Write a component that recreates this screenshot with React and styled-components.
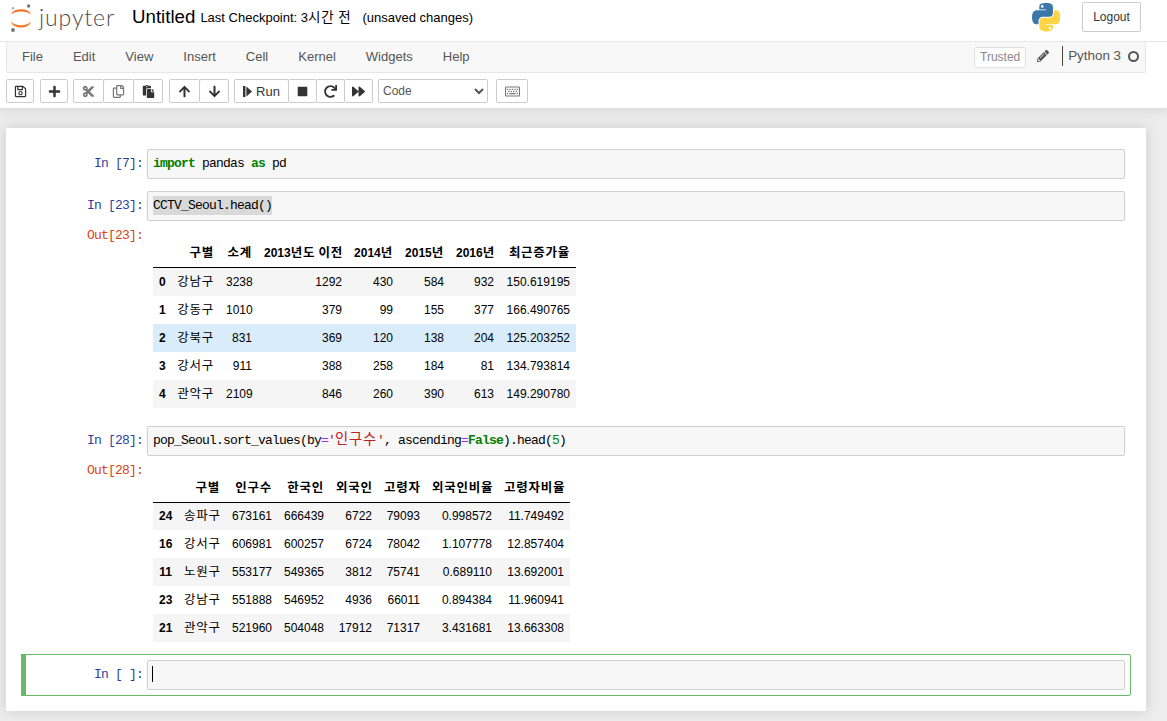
import React from 'react';
import styled, { createGlobalStyle } from 'styled-components';
import {
  FaRegSave, FaPlus, FaCut, FaRegCopy, FaPaste, FaArrowUp, FaArrowDown,
  FaStop, FaRedo, FaForward, FaRegKeyboard, FaPencilAlt,
} from 'react-icons/fa';

const SANS = `"Liberation Sans", "Noto Sans CJK KR", sans-serif`;
const MONO = `"Liberation Mono", "Noto Sans CJK KR", monospace`;

const GlobalStyle = createGlobalStyle`
  html, body { margin: 0; height: 100%; overflow: hidden; background: #eee; }
  body { font-family: ${SANS}; font-size: 13px; color: #000; }
  * { box-sizing: border-box; }
`;

// Header
const Top = styled.header`
  position: relative;
  z-index: 2;
  height: 108px;
  background: #fff;
  box-shadow: 0 0 12px 1px rgba(87, 87, 87, 0.2);
`;

const TitleBar = styled.div`
  height: 42px;
  display: flex;
  align-items: center;
  padding: 0 26px 7px 10px;
  border-bottom: 1px solid #e7e7e7;
`;

const Brand = styled.div`
  display: flex;
  align-items: center;
  width: 122px;
`;

const Wordmark = styled.span`
  font-family: Lato, "Noto Sans", sans-serif;
  font-size: 23px;
  font-weight: 300;
  letter-spacing: 0.9px;
  color: #4e4e4e;
  margin-left: 7px;
  line-height: 30px;
`;

const NotebookName = styled.span`
  font-size: 18.7px;
  margin-right: 5px;
`;

const Checkpoint = styled.span`
  font-size: 13px;
  margin-right: 11px;
`;

const Spacer = styled.div`
  flex: 1;
`;

const LogoutButton = styled.button`
  width: 59px;
  height: 30px;
  margin-left: 22px;
  background: #fff;
  border: 1px solid #ccc;
  border-radius: 2px;
  font: 12px ${SANS};
  color: #333;
  padding: 0;
`;

const MenuBar = styled.nav`
  height: 32px;
  margin: -1px 21px 0 6px;
  display: flex;
  align-items: center;
  padding: 0 6px 2px 0;
  background: #f8f8f8;
  border: 1px solid #e7e7e7;
  border-radius: 2px;
`;

const MenuItem = styled.a`
  padding: 0 15px;
  font-size: 13px;
  color: #555;
`;

const TrustedBadge = styled.span`
  width: 52px;
  height: 21px;
  margin-top: 2px;
  line-height: 19px;
  text-align: center;
  font-size: 12px;
  color: #888;
  background: #fff;
  border: 1px solid #e0e0e0;
  border-radius: 2px;
`;

const EditIcon = styled(FaPencilAlt)`
  font-size: 12px;
  color: #555;
  margin: 0 13px 0 11px;
`;

const KernelName = styled.span`
  font-size: 13.4px;
  color: #555;
  border-left: 1px solid #444;
  padding-left: 5px;
  line-height: 20px;
  margin-right: 7px;
`;

const KernelDot = styled.span`
  width: 11px;
  height: 11px;
  border-radius: 50%;
  border: 2px solid #555;
`;

const ToolBar = styled.div`
  height: 24px;
  margin-top: 6px;
  padding-left: 6px;
  display: flex;
  align-items: stretch;
`;

const BtnGroup = styled.div`
  display: flex;
  margin-right: ${p => p.$gap || 5}px;
`;

const ToolBtn = styled.button`
  width: ${p => p.$w || 28}px;
  height: 24px;
  margin-left: -1px;
  padding: 0;
  display: flex;
  align-items: center;
  justify-content: center;
  gap: 4px;
  background: #fff;
  border: 1px solid #ccc;
  border-radius: 2px;
  font: 13px ${SANS};
  color: ${p => p.$muted ? '#777' : '#333'};
  &:first-child { margin-left: 0; }
  svg { font-size: ${p => p.$icon || 13}px; }
`;

const CellType = styled.select`
  width: 110px;
  height: 24px;
  margin-right: 9px;
  padding: 0;
  background: #fff;
  border: 1px solid #ccc;
  border-radius: 2px;
  font: 12px ${SANS};
  color: #555;
`;

// Notebook
const Site = styled.main`
  height: 613px;
  padding: 20px 21px 0 6px;
`;

const Panel = styled.div`
  width: 1140px;
  height: 583px;
  padding: 15px 15px 0;
  background: #fff;
  box-shadow: 0 0 12px 1px rgba(87, 87, 87, 0.2);
`;

const Cell = styled.section`
  width: 1110px;
  padding: 5px;
  border: 1px solid ${p => p.$selected ? '#66bb6a' : 'transparent'};
  border-radius: 2px;
  position: relative;
  ${p => p.$selected && `
    &::before {
      content: '';
      position: absolute;
      left: -1px; top: -1px; bottom: -1px;
      width: 5px;
      background: #66bb6a;
    }
  `}
`;

const Row = styled.div`
  display: grid;
  grid-template-columns: 120px 978px;
`;

const Prompt = styled.div`
  font: 13px/20px ${MONO};
  letter-spacing: -0.8px;
  text-align: right;
  padding: 5px 4px 0 0;
  color: ${p => p.$out ? '#d84315' : '#303f9f'};
`;

const Input = styled.div`
  height: 30px;
  padding: 0 5px;
  background: #f7f7f7;
  border: 1px solid #cfcfcf;
  border-radius: 2px;
  font: 13px/28px ${MONO};
  letter-spacing: -0.8px;
  white-space: pre;
  color: #000;
`;

const Kw = styled.span`
  color: #008000;
  font-weight: bold;
`;

const Op = styled.span`
  color: #aa22ff;
`;

const Str = styled.span`
  color: #ba2121;
`;

// Noto's hangul runs narrower than the reference's, hence the spacing
const HangulRun = styled.span`
  font-family: "Noto Sans CJK KR", sans-serif;
  font-size: 1.04em;
  letter-spacing: 0.06em;
  line-height: 1;
`;

const CodeHangul = styled(HangulRun)`
  font-size: 1.1em;
  letter-spacing: 0.8px;
`;

const Num = styled.span`
  color: #008000;
`;

const Selection = styled.span`
  background: #d9d9d9;
  padding: 2px 0;
`;

const Caret = styled.span`
  display: inline-block;
  width: 1px;
  height: 16px;
  margin: -1px 0 0 -1px;
  background: #000;
  vertical-align: middle;
`;

const Output = styled.div`
  padding: 18.6px 0 6px 6px;
`;

const Table = styled.table`
  border-collapse: collapse;
  border-spacing: 0;
  table-layout: fixed;
  width: ${p => p.$w}px;
  font: 12px ${SANS};
  color: #000;
`;

const HeadCell = styled.th`
  height: 28px;
  padding: 0 6px;
  text-align: right;
  font-weight: bold;
  white-space: nowrap;
  border-bottom: 1px solid #000;
`;

const BodyRow = styled.tr`
  background: ${p => p.$hover ? '#d9ecfb' : p.$odd ? '#f5f5f5' : '#fff'};
`;

const IndexCell = styled.th`
  height: 28px;
  padding: 0 6px;
  text-align: right;
  font-weight: bold;
`;

const DataCell = styled.td`
  height: 28px;
  padding: 0 6px;
  text-align: right;
  white-space: nowrap;
`;

const cctv = {
  widths: [18, 49, 38, 90, 51, 51, 50, 76],
  head: ['', '구별', '소계', '2013년도 이전', '2014년', '2015년', '2016년', '최근증가율'],
  rows: [
    ['0', '강남구', '3238', '1292', '430', '584', '932', '150.619195'],
    ['1', '강동구', '1010', '379', '99', '155', '377', '166.490765'],
    ['2', '강북구', '831', '369', '120', '138', '204', '125.203252'],
    ['3', '강서구', '911', '388', '258', '184', '81', '134.793814'],
    ['4', '관악구', '2109', '846', '260', '390', '613', '149.290780'],
  ],
};

const pop = {
  widths: [25, 48, 52, 52, 48, 48, 72, 72],
  head: ['', '구별', '인구수', '한국인', '외국인', '고령자', '외국인비율', '고령자비율'],
  rows: [
    ['24', '송파구', '673161', '666439', '6722', '79093', '0.998572', '11.749492'],
    ['16', '강서구', '606981', '600257', '6724', '78042', '1.107778', '12.857404'],
    ['11', '노원구', '553177', '549365', '3812', '75741', '0.689110', '13.692001'],
    ['23', '강남구', '551888', '546952', '4936', '66011', '0.894384', '11.960941'],
    ['21', '관악구', '521960', '504048', '17912', '71317', '3.431681', '13.663308'],
  ],
};

const menus = ['File', 'Edit', 'View', 'Insert', 'Cell', 'Kernel', 'Widgets', 'Help'];

// wraps the hangul parts of a string so they get their own size
const ko = text => text.split(/([가-힣]+)/).map((part, i) =>
  i % 2 ? <HangulRun key={i}>{part}</HangulRun> : part
);

function DataFrame({ data, hoverRow }) {
  const total = data.widths.reduce((a, b) => a + b, 0);
  return (
    <Table $w={total}>
      <colgroup>
        {data.widths.map((w, i) => <col key={i} style={{ width: w }} />)}
      </colgroup>
      <thead>
        <tr>{data.head.map((h, i) => <HeadCell key={i}>{ko(h)}</HeadCell>)}</tr>
      </thead>
      <tbody>
        {data.rows.map((r, i) => (
          <BodyRow key={i} $odd={i % 2 === 0} $hover={i === hoverRow}>
            <IndexCell>{r[0]}</IndexCell>
            {r.slice(1).map((v, j) => <DataCell key={j}>{ko(v)}</DataCell>)}
          </BodyRow>
        ))}
      </tbody>
    </Table>
  );
}

function JupyterLogo() {
  return (
    <svg width="22" height="30" viewBox="0 0 22 30">
      <path d="M1 12.5C3 5.5 19 5.5 21 12.5C17 8.5 5 8.5 1 12.5Z" fill="#f37726" />
      <path d="M1 19.5C5 24.5 17 24.5 21 19.5C19 27.5 3 27.5 1 19.5Z" fill="#f37726" />
      <circle cx="18.6" cy="4" r="1.7" fill="#767677" />
      <circle cx="3" cy="28" r="1.9" fill="#767677" />
      <circle cx="3" cy="6.2" r="1.1" fill="#9e9e9e" />
    </svg>
  );
}

function PythonLogo() {
  return (
    <svg width="28" height="30" viewBox="0 0 110 110">
      <path fill="#3b77a8" d="M54.919 0C50.335.02 45.958.41 42.106 1.095 30.76 3.1 28.7 7.295 28.7 15.032v10.219h26.813v3.406H18.638c-7.793 0-14.616 4.684-16.75 13.594-2.462 10.213-2.571 16.586 0 27.25 1.906 7.938 6.458 13.594 14.25 13.594h9.219V70.844c0-8.85 7.657-16.656 16.75-16.656h26.781c7.454 0 13.406-6.138 13.406-13.625V15.032c0-7.266-6.13-12.725-13.406-13.937C64.282.328 59.502-.02 54.919 0zM40.419 8.22c2.77 0 5.031 2.299 5.031 5.125 0 2.816-2.262 5.094-5.031 5.094-2.779 0-5.031-2.278-5.031-5.094 0-2.826 2.252-5.125 5.031-5.125z" />
      <path fill="#ffd545" d="M85.638 28.657v11.906c0 9.231-7.826 17-16.75 17H42.107c-7.336 0-13.406 6.278-13.406 13.625v25.531c0 7.266 6.319 11.54 13.406 13.625 8.487 2.496 16.626 2.947 26.781 0 6.75-1.954 13.406-5.888 13.406-13.625V86.501H55.513v-3.406h40.188c7.793 0 10.696-5.436 13.406-13.594 2.799-8.399 2.68-16.476 0-27.25-1.926-7.757-5.604-13.594-13.406-13.594zM70.575 93.313c2.779 0 5.031 2.278 5.031 5.094 0 2.826-2.252 5.125-5.031 5.125-2.77 0-5.031-2.299-5.031-5.125 0-2.816 2.262-5.094 5.031-5.094z" />
    </svg>
  );
}

function RunIcon() {
  return (
    <svg width="9" height="11" viewBox="0 0 9 11">
      <rect x="0" y="0" width="2.4" height="11" fill="#333" />
      <path d="M3.4 0.5L9 5.5L3.4 10.5Z" fill="#333" />
    </svg>
  );
}

export default function App() {
  return (
    <>
      <GlobalStyle />
      <Top>
        <TitleBar>
          <Brand>
            <JupyterLogo />
            <Wordmark>jupyter</Wordmark>
          </Brand>
          <NotebookName>Untitled</NotebookName>
          <Checkpoint>Last Checkpoint: 3{ko('시간')} {ko('전')}</Checkpoint>
          <Checkpoint>(unsaved changes)</Checkpoint>
          <Spacer />
          <PythonLogo />
          <LogoutButton>Logout</LogoutButton>
        </TitleBar>
        <MenuBar>
          {menus.map(m => <MenuItem key={m}>{m}</MenuItem>)}
          <Spacer />
          <TrustedBadge>Trusted</TrustedBadge>
          <EditIcon />
          <KernelName>Python 3</KernelName>
          <KernelDot />
        </MenuBar>
        <ToolBar>
          <BtnGroup $gap={6}><ToolBtn><FaRegSave /></ToolBtn></BtnGroup>
          <BtnGroup><ToolBtn><FaPlus /></ToolBtn></BtnGroup>
          <BtnGroup $gap={6}>
            <ToolBtn $w={31} $muted><FaCut /></ToolBtn>
            <ToolBtn $w={31} $muted><FaRegCopy /></ToolBtn>
            <ToolBtn $w={30}><FaPaste /></ToolBtn>
          </BtnGroup>
          <BtnGroup>
            <ToolBtn $w={31}><FaArrowUp /></ToolBtn>
            <ToolBtn $w={30}><FaArrowDown /></ToolBtn>
          </BtnGroup>
          <BtnGroup>
            <ToolBtn $w={55}><RunIcon />Run</ToolBtn>
            <ToolBtn $w={29} $icon={11}><FaStop /></ToolBtn>
            <ToolBtn $w={29}><FaRedo /></ToolBtn>
            <ToolBtn $w={29}><FaForward /></ToolBtn>
          </BtnGroup>
          <CellType defaultValue="Code">
            <option>Code</option>
            <option>Markdown</option>
          </CellType>
          <ToolBtn $w={32} $icon={15} $muted><FaRegKeyboard /></ToolBtn>
        </ToolBar>
      </Top>
      <Site>
        <Panel>
          <Cell>
            <Row>
              <Prompt>In [7]:</Prompt>
              <Input><Kw>import</Kw> pandas <Kw>as</Kw> pd</Input>
            </Row>
          </Cell>
          <Cell>
            <Row>
              <Prompt>In [23]:</Prompt>
              <Input><Selection>CCTV_Seoul.head()</Selection></Input>
            </Row>
            <Row>
              <Prompt $out>Out[23]:</Prompt>
              <Output><DataFrame data={cctv} hoverRow={2} /></Output>
            </Row>
          </Cell>
          <Cell>
            <Row>
              <Prompt>In [28]:</Prompt>
              <Input>
                pop_Seoul.sort_values(by<Op>=</Op><Str>'<CodeHangul>인구수</CodeHangul>'</Str>, ascending<Op>=</Op><Kw>False</Kw>).head(<Num>5</Num>)
              </Input>
            </Row>
            <Row>
              <Prompt $out>Out[28]:</Prompt>
              <Output><DataFrame data={pop} /></Output>
            </Row>
          </Cell>
          <Cell $selected>
            <Row>
              <Prompt>In [ ]:</Prompt>
              <Input><Caret /></Input>
            </Row>
          </Cell>
        </Panel>
      </Site>
    </>
  );
}
